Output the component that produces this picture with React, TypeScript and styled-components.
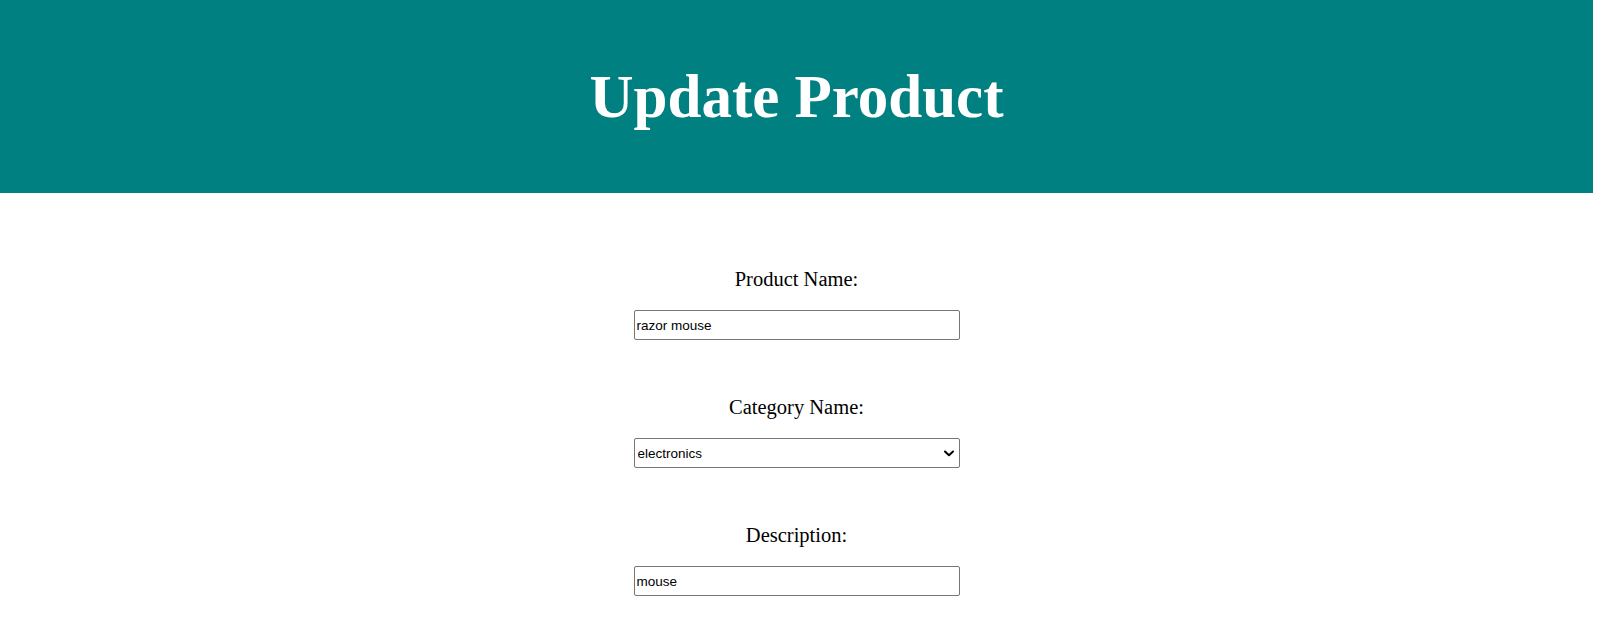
import React from "react";
import styled, { createGlobalStyle } from "styled-components";

const GlobalStyle = createGlobalStyle`
  html, body {
    margin: 0;
    padding: 0;
    overflow: hidden;
    background: #ffffff;
  }
  body {
    font-family: "Liberation Serif", "Times New Roman", serif;
    color: #000000;
  }
`;

const Page = styled.div`
  width: 1593px;
`;

const Header = styled.header`
  height: 193px;
  background: #008080;
  display: flex;
  align-items: center;
  justify-content: center;
`;

const Title = styled.h1`
  margin: 0;
  font-family: "Liberation Serif", "Times New Roman", serif;
  font-size: 61px;
  font-weight: 700;
  line-height: 70px;
  color: #ffffff;
`;

const Form = styled.form`
  display: flex;
  flex-direction: column;
  align-items: center;
  gap: 56px;
  padding-top: 75px;
`;

const Field = styled.div`
  display: flex;
  flex-direction: column;
  align-items: center;
  gap: 19px;
`;

const Label = styled.label`
  font-family: "Liberation Serif", "Times New Roman", serif;
  font-size: 20.5px;
  line-height: 23px;
  color: #000000;
`;

const controlStyles = `
  box-sizing: border-box;
  width: 326px;
  height: 30px;
  margin: 0;
  border: 1px solid #767676;
  border-radius: 2px;
  background: #ffffff;
  font-family: "Liberation Sans", Arial, sans-serif;
  font-size: 13.5px;
  color: #000000;
  outline: none;
`;

const TextInput = styled.input`
  ${controlStyles}
  padding: 0 2px;
`;

const SelectWrap = styled.div`
  position: relative;
  width: 326px;
  height: 30px;
`;

const Select = styled.select`
  ${controlStyles}
  appearance: none;
  -webkit-appearance: none;
  padding: 0 24px 0 3px;
`;

const Chevron = styled.svg`
  position: absolute;
  right: 6px;
  top: 50%;
  width: 10px;
  height: 7px;
  margin-top: -3px;
  pointer-events: none;
`;

export default function App() {
  return (
    <Page>
      <GlobalStyle />
      <Header>
        <Title>Update Product</Title>
      </Header>
      <Form onSubmit={(e) => e.preventDefault()}>
        <Field>
          <Label htmlFor="productName">Product Name:</Label>
          <TextInput id="productName" type="text" defaultValue="razor mouse" />
        </Field>
        <Field>
          <Label htmlFor="categoryName">Category Name:</Label>
          <SelectWrap>
            <Select id="categoryName" defaultValue="electronics">
              <option value="electronics">electronics</option>
              <option value="clothing">clothing</option>
              <option value="books">books</option>
            </Select>
            <Chevron viewBox="0 0 10 7" aria-hidden="true">
              <path
                d="M1 1.5 L5 5.2 L9 1.5"
                fill="none"
                stroke="#000"
                strokeWidth="2"
                strokeLinecap="round"
                strokeLinejoin="round"
              />
            </Chevron>
          </SelectWrap>
        </Field>
        <Field>
          <Label htmlFor="description">Description:</Label>
          <TextInput id="description" type="text" defaultValue="mouse" />
        </Field>
      </Form>
    </Page>
  );
}
